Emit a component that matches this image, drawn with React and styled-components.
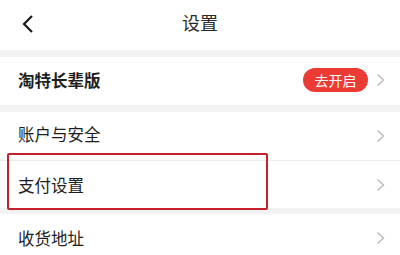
import React from 'react'
import styled, { createGlobalStyle } from 'styled-components'

const Global = createGlobalStyle`
  body {
    margin: 0;
    background: #f3f3f3;
    font-family: "Noto Sans CJK SC", "Noto Sans", sans-serif;
  }
`

const Page = styled.div`
  width: 400px;
  height: 255px;
  overflow: hidden;
  background: #f3f3f3;
`

const Header = styled.div`
  height: 50px;
  background: #fff;
  display: flex;
  align-items: center;
  justify-content: center;
  position: relative;
  margin-bottom: 7px;
`

const Back = styled.svg`
  position: absolute;
  left: 21px;
  top: 14px;
`

const Title = styled.div`
  font-size: 18px;
  color: #2a2a2a;
  margin-top: -6px;
`

const Group = styled.div`
  background: #fff;
  margin-bottom: ${p => p.gap || 0}px;
`

const Row = styled.div`
  position: relative;
  height: ${p => p.h || 48}px;
  display: flex;
  align-items: center;
  padding: 0 15px 0 18px;
  border-bottom: ${p => (p.line ? '1px solid #ececec' : 'none')};
`

const Label = styled.div`
  flex: 1;
  font-size: 16.5px;
  font-weight: ${p => (p.bold ? 700 : 400)};
  color: #1e1e1e;
  margin-top: ${p => p.dy || 0}px;
`

const Badge = styled.div`
  width: 65px;
  height: 24px;
  border-radius: 12px;
  background: #ec3a34;
  color: #fff;
  font-size: 14px;
  display: flex;
  align-items: center;
  justify-content: center;
  margin-right: 8px;
  margin-top: -3px;
`

const Mark = styled.div`
  position: absolute;
  left: 7px;
  top: -8px;
  width: 261px;
  height: 57px;
  box-sizing: border-box;
  border: 2px solid #c4202b;
  border-radius: 2px;
`

const Chevron = ({ dy = 0 }) => (
  <svg width="9" height="14" viewBox="0 0 9 14" style={{ marginTop: dy }}>
    <path d="M1.5 1.5 L7.5 7 L1.5 12.5" fill="none" stroke="#b9b9b9" strokeWidth="1.4" />
  </svg>
)

export default function App () {
  return (
    <Page>
      <Global />
      <Header>
        <Back width="14" height="20" viewBox="0 0 14 20">
          <path d="M11 2 L3 10 L11 18" fill="none" stroke="#1a1a1a" strokeWidth="2.2" />
        </Back>
        <Title>设置</Title>
      </Header>
      <Group gap={7}>
        <Row>
          <Label bold dy={-3}>淘特长辈版</Label>
          <Badge>去开启</Badge>
          <Chevron dy={-3} />
        </Row>
      </Group>
      <Group gap={6}>
        <Row line>
          <Label dy={-4}>账户与安全</Label>
          <Chevron />
        </Row>
        <Row h={47}>
          <Mark />
          <Label dy={0}>支付设置</Label>
          <Chevron />
        </Row>
      </Group>
      <Group>
        <Row>
          <Label dy={0}>收货地址</Label>
          <Chevron />
        </Row>
      </Group>
    </Page>
  )
}
